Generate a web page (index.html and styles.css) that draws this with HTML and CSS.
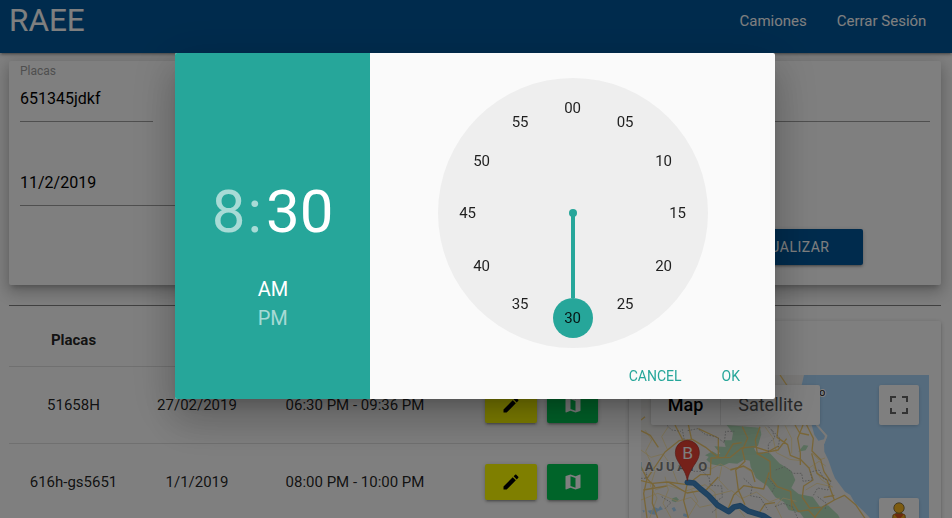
FILE: index.html
```html
<!DOCTYPE html>
<html lang="es">
<head>
<meta charset="utf-8">
<title>RAEE</title>
<link rel="stylesheet" href="styles.css">
</head>
<body>
<svg class="defs" width="0" height="0">
  <symbol id="edit" viewBox="0 0 24 24"><path d="M3 17.25V21h3.75L17.81 9.94l-3.75-3.75L3 17.25zM20.71 7.04c.39-.39.39-1.02 0-1.41l-2.34-2.34c-.39-.39-1.02-.39-1.41 0l-1.83 1.83 3.75 3.75 1.83-1.83z"/></symbol>
  <symbol id="map" viewBox="0 0 24 24"><path d="M20.5 3l-.16.03L15 5.1 9 3 3.36 4.9c-.21.07-.36.25-.36.48V20.5c0 .28.22.5.5.5l.16-.03L9 18.9l6 2.1 5.64-1.9c.21-.07.36-.25.36-.48V3.5c0-.28-.22-.5-.5-.5zM15 19l-6-2.11V5l6 2.11V19z"/></symbol>
</svg>

<nav class="nav">
  <a class="brand">RAEE</a>
  <div class="links"><a>Camiones</a><a>Cerrar Sesión</a></div>
</nav>

<main class="page">
  <form class="form-card">
    <div class="form-row">
      <div class="field small"><label>Placas</label><div class="input">651345jdkf</div></div>
      <div class="field wide"><label></label><div class="input"></div></div>
    </div>
    <div class="form-row second">
      <div class="field half"><label></label><div class="input">11/2/2019</div></div>
    </div>
    <div class="form-actions"><button type="button" class="btn submit">ACTUALIZAR</button></div>
  </form>

  <div class="rule"></div>

  <div class="content">
    <div class="table">
      <div class="tr head"><span>Placas</span><span></span><span></span><span></span></div>
      <div class="tr">
        <span>51658H</span><span>27/02/2019</span><span>06:30 PM - 09:36 PM</span>
        <span class="actions"><button class="btn yellow"><svg><use href="#edit"/></svg></button><button class="btn green"><svg><use href="#map"/></svg></button></span>
      </div>
      <div class="tr">
        <span>616h-gs5651</span><span>1/1/2019</span><span>08:00 PM - 10:00 PM</span>
        <span class="actions"><button class="btn yellow"><svg><use href="#edit"/></svg></button><button class="btn green"><svg><use href="#map"/></svg></button></span>
      </div>
    </div>

    <div class="map-card">
      <div class="map">
        <svg class="tiles" viewBox="48 195 864 480">
          <rect class="land" x="48" y="195" width="864" height="480"/>
          <path class="forest" d="M305 345l100 8 4 20-10 34-12 8 8 14-14 24-24-4-20 12-25-2-22 10-30-6-16-14 12-14 30-4-18-22 34 2-6-20 24 0 4-22z"/>
          <path class="forest" d="M385 425l50 5 28 30 36 22 12 28-12 24 22 18 42 8 22 30 24-4 30 28 20 40-110-12-24-34-34-8-14-24-26-14-24-34-34-24-16-34-4-24z"/>
          <path class="forest" d="M520 425l16-20 14 2-8 14zM240 436l22-12 14 8-12 14zM142 565l12-4 8 8-10 8-12-4z"/>
          <path class="water" d="M537 195L530 225 545 300 560 345 568 375 580 392 597 388 600 378 575 347 580 345 607 378 597 402 598 425 610 450 622 485 630 505 660 545 676 555 690 580 712 600 735 624 770 675H912V195z"/>
          <path class="spit" d="M574 345L605 377 596 401"/>
          <path class="water" d="M68 602l14-2 4-10 14 6 6-8 8 10-16 6-6 10-16-2zM140 595l8-4 6 10-8 4zM52 600l8 2-4 6zM176 610l14 4-4 8-12-4z"/>
          <g class="minor">
            <path d="M48 420l30 22 36-10 24 34 20 54M60 360l20 30-18 34 28 60-14 44 20 36-22 60M90 540l40-14 50 18 60-20 30 24 4 76M48 570l50-20 60 24 40-12 26 30 36-8M120 500l10 40-16 40 24 44M200 540l18 34-30 50M230 470l30 6 26-14 28 16 40-8 34 20M250 560l70-18 30 24 44-20 40 30 30-12M290 470l-8 40 28 30M420 350l24 34 10 44 40 20 32 4M480 346l20 40 0 44M552 474l30-20 20 14M562 430l20 20 18-6M566 470l22 38 36 24M620 530l-44-10-34 20M450 590l24-26 40 10M340 596l20 26M470 624l-20-40M130 350l-20 30 18 40"/>
          </g>
          <g class="major">
            <path d="M48 512l34 8 46-4 58 8 40-30 30 0 2-50 58-2 34-28 36-4 46 14 28-16"/>
            <path d="M48 470l18 36-10 44 10 74M66 506l54-80 42-34 40-4 40 24 36 30M100 412l-24-36-28-14M84 520l-2 60 16 44M132 517l54 32 58-10 36-38M186 524l-10 48 14 52M150 345l24 46M220 356l60 28 0 58M200 390l-10-46M352 350l16 34-16 36 8 34-28 26 8 60 20 44M395 430l40 24 2 50 20 26 40 14 4 56M405 350l-14 40 6 42 62-12 26-34M460 346l-4 36 32 22 8 32 30 12 26 26 12 36-28 18-4 34 22 32 34-2M465 195l28 42 30 50 22 58 20 40-4 38 26 26 10 36 20 30M534 345l-16 40 8 44 0 36M510 345l14 24 28 6M560 430l16 60 30 20 22 60 30-14 34 28 34 50M628 570l-34 20-26 34M596 562l32-6M500 570l20 34 30-4 22 24M310 595l16-40 30-28 60 10 16-50M400 612l20-30 30-4"/>
            <path d="M300 442l24-40 26-4M316 480l40-12 24 14 10 34M60 320l-12 10M55 540l70-12M60 500l30 30"/>
          </g>
          <path class="border" d="M188 362l30-6 24 18 30 6 26 18 4-34 26 0M120 340l20 20 28 4M190 400l-12-8-6-34M160 470l6-20 24-10M196 484l36 0 20 18 4 24 34 2 2 34-22 14 6 20-16 12M48 505l18 0-2-20M356 505l26 24-6 28 30 6 22 36M430 505l20 24-10 20M440 360l10 22-20 20 0 30M430 350l34 34-4 28M452 480l28-10 24 20 26 0 4 24 28-4-6-24 26-6 14 26 22 6-10 28-30-6-14 24M450 590l24-10 28 10 16 34M578 560l26 20-4 20M110 560l28 18-18 18"/>
          <path class="route-edge" d="M187 517l20 2 20 18 24 20 26 28 34 20 16-14 18-4 26 17 44 13 28 18"/>
          <path class="route" d="M187 517l20 2 20 18 24 20 26 28 34 20 16-14 18-4 26 17 44 13 28 18"/>
          <text class="state" x="23" y="483" textLength="224">NAJUATO</text>
          <text class="city" x="583" y="257">o</text>
          <path class="pin" d="M187 391a36 36 0 0 1 36 36c0 20-12 32-19 44-9 14-14 24-17 41-3-17-8-27-17-41-7-12-19-24-19-44a36 36 0 0 1 36-36z"/>
          <text class="pin-text" x="188" y="446">B</text>
        </svg>
        <div class="map-top">
          <div class="types"><span class="on">Map</span><span>Satellite</span></div>
          <div class="ctl">
            <svg viewBox="0 0 18 18" width="18" height="18"><path d="M0 0v6h2V2h4V0H0zm16 0h-4v2h4v4h2V0h-2zm0 16h-4v2h6v-6h-2v4zM2 12H0v6h6v-2H2v-4z" fill="#666"/></svg>
          </div>
        </div>
        <div class="ctl street">
          <svg viewBox="0 0 24 34" width="24" height="34"><path d="M6 13q6-4 12 0l1 9-3 1v9H8v-9l-3-1z" fill="#f0a81c" stroke="#8a5a14" stroke-width=".8"/><path d="M7 12l5 6 5-6z" fill="#d9541e"/><circle cx="12" cy="6" r="5.2" fill="#fbb823" stroke="#6b5b37" stroke-width=".8"/></svg>
        </div>
      </div>
    </div>
  </div>
</main>

<div class="overlay"></div>

<div class="modal">
  <div class="digital">
    <div class="time"><span class="dim">8</span><span class="dim colon">:</span><span>30</span></div>
    <div class="ampm"><span>AM</span><span class="dim">PM</span></div>
  </div>
  <div class="analog">
    <svg class="dial" viewBox="-135 -135 270 270" width="270" height="270">
      <circle r="135" fill="#eee"/>
      <path d="M0 0V85" stroke="#26a69a" stroke-width="4"/>
      <circle r="4" fill="#26a69a"/>
      <circle cy="105" r="20" fill="#26a69a"/>
      <g class="ticks">
        <text x="-.4" y="-100">00</text><text x="52.1" y="-86">05</text><text x="90.6" y="-47">10</text>
        <text x="104.6" y="5">15</text><text x="90.6" y="58">20</text><text x="52.1" y="96">25</text>
        <text x="-.4" y="110">30</text><text x="-52.9" y="96">35</text><text x="-91.4" y="58">40</text>
        <text x="-105.4" y="5">45</text><text x="-91.4" y="-47">50</text><text x="-52.9" y="-86">55</text>
      </g>
    </svg>
    <div class="modal-actions"><span>CANCEL</span><span>OK</span></div>
  </div>
</div>
</body>
</html>
```
FILE: styles.css
```css
* { box-sizing: border-box; }
html, body { height: 100%; overflow: hidden; }
body { margin: 0; background: #fff; color: rgba(0,0,0,.87); font: 15px/22px Roboto, sans-serif; }
.defs { position: absolute; }

.nav {
  position: relative;
  display: flex; justify-content: space-between;
  height: 53px; padding: 0 10.6px 11px 9px;
  background: #01579b; color: #fff; line-height: 42px;
  box-shadow: 0 2px 2px 0 rgba(0,0,0,.14), 0 3px 1px -2px rgba(0,0,0,.12), 0 1px 5px 0 rgba(0,0,0,.2);
}
.brand { font-size: 31.5px; line-height: 41px; }
.links { display: flex; }
.links a { padding: 0 15px; }

.page { height: 465px; overflow: hidden; padding: 8px 11px 0 9px; }
.form-card {
  height: 224px; padding: 0 11px; border-radius: 2px; background: #fff;
  box-shadow: 0 8px 17px 2px rgba(0,0,0,.14), 0 3px 14px 2px rgba(0,0,0,.12), 0 5px 5px -3px rgba(0,0,0,.2);
}
.form-row { display: flex; gap: 22px; height: 61px; }
.form-row.second { margin-top: 23px; }
.field { display: flex; flex-direction: column; }
.field.small { width: 133px; }
.field.wide { flex: 1; }
.field.half { width: 444px; }
.field label { height: 15px; padding-top: 3px; font-size: 12px; line-height: 15px; color: #9e9e9e; }
.input { height: 46px; border-bottom: 1px solid #9e9e9e; font-size: 16px; line-height: 45px; color: #000; }
.form-actions { display: flex; justify-content: flex-end; padding: 23px 67px 0 0; }
.btn {
  display: flex; align-items: center; justify-content: center;
  height: 36px; padding: 0; border: 0; border-radius: 2px;
  box-shadow: 0 2px 2px 0 rgba(0,0,0,.14), 0 3px 1px -2px rgba(0,0,0,.12), 0 1px 5px 0 rgba(0,0,0,.2);
}
.submit { width: 152px; padding-right: 2px; background: #01579b; color: #fff; font: 14px Roboto, sans-serif; letter-spacing: .5px; }
.rule { height: 1px; margin-top: 20px; background: #808080; }

.content { display: flex; }
.table { width: 620px; }
.tr {
  display: grid; grid-template-columns: 129px 118px 198px 1fr; align-items: center;
  height: 77px; border-bottom: 1px solid rgba(0,0,0,.12); text-align: center;
}
.tr.head { height: 61px; padding-top: 8px; font-weight: bold; }
.actions { display: flex; gap: 10px; padding-left: 31px; }
.actions svg { width: 20px; height: 20px; }
.yellow { width: 52px; background: #ff0; fill: #000; }
.green { width: 51px; background: #00c853; fill: #fff; }

.map-card {
  width: 312px; height: 260px; margin-top: 15px; padding: 54px 12px 0; border-radius: 2px; background: #fff;
  box-shadow: 0 2px 2px 0 rgba(0,0,0,.14), 0 3px 1px -2px rgba(0,0,0,.12), 0 1px 5px 0 rgba(0,0,0,.2);
}
.map { position: relative; height: 160px; overflow: hidden; }
.tiles { position: absolute; inset: 0; width: 288px; height: 160px; }
.land { fill: #f4f3f0; }
.forest { fill: #b5dfbb; }
.water { fill: #aad7fb; }
.spit { fill: none; stroke: #f4f3f0; stroke-width: 4; }
.minor { fill: none; stroke: #fbe3a4; stroke-width: 2.5; stroke-linejoin: round; }
.major { fill: none; stroke: #f3cd73; stroke-width: 4; stroke-linejoin: round; }
.border { fill: none; stroke: #a6a6a6; stroke-width: 2.5; stroke-dasharray: 5 4; stroke-linejoin: round; }
.route, .route-edge { fill: none; stroke-linecap: round; stroke-linejoin: round; }
.route-edge { stroke: #3c82bd; stroke-width: 17; }
.route { stroke: #4288c6; stroke-width: 11; }
.state { font: 700 39px Roboto, sans-serif; fill: #808080; stroke: #fff; stroke-width: 4; paint-order: stroke; }
.city { font: 32px Roboto, sans-serif; fill: #222; stroke: #fff; stroke-width: 6; paint-order: stroke; }
.pin { fill: #ea4335; stroke: #b7332a; stroke-width: 2; }
.pin-text { font: 52px Roboto, sans-serif; fill: #fff; text-anchor: middle; }
.map-top { position: relative; display: flex; justify-content: space-between; padding: 10px; }
.types { display: flex; width: 169px; height: 40px; border-radius: 2px; background: #fff; box-shadow: 0 1px 4px -1px rgba(0,0,0,.3); font-size: 18px; line-height: 40px; text-align: center; color: #565656; }
.types span { flex: 1; }
.types .on { flex: none; width: 70px; border-right: 1px solid #e6e6e6; font-weight: 500; color: #000; }
.ctl { display: flex; align-items: center; justify-content: center; width: 40px; height: 40px; border-radius: 2px; background: #fff; box-shadow: 0 1px 4px -1px rgba(0,0,0,.3); }
.street { position: relative; height: 60px; margin: 63px 10px 0 auto; align-items: flex-start; padding-top: 4px; }

.overlay { position: fixed; inset: 0; background: rgba(0,0,0,.5); }
.modal {
  position: fixed; left: 175px; top: 53px; display: flex; width: 600px; height: 346px;
  border-radius: 2px; background: #fafafa; overflow: hidden;
  box-shadow: 0 24px 38px 3px rgba(0,0,0,.14), 0 9px 46px 8px rgba(0,0,0,.12), 0 11px 15px -7px rgba(0,0,0,.2);
}
.digital { display: flex; flex-direction: column; align-items: center; width: 195px; padding-top: 124px; background: #26a69a; color: #fff; }
.time { display: flex; font-size: 60px; line-height: 70px; }
.colon { margin: 0 4px 0 2px; }
.dim { color: rgba(255,255,255,.6); }
.ampm { display: flex; flex-direction: column; margin-top: 28px; padding-left: 1px; font-size: 20px; line-height: 29px; }
.analog { display: flex; flex: 1; flex-direction: column; padding: 25px 35px 0 68px; }
.dial { display: block; }
.ticks { font: 15px Roboto, sans-serif; fill: rgba(0,0,0,.87); text-anchor: middle; }
.modal-actions { display: flex; justify-content: flex-end; gap: 40px; padding-top: 17px; font-size: 14px; color: #26a69a; }
```
